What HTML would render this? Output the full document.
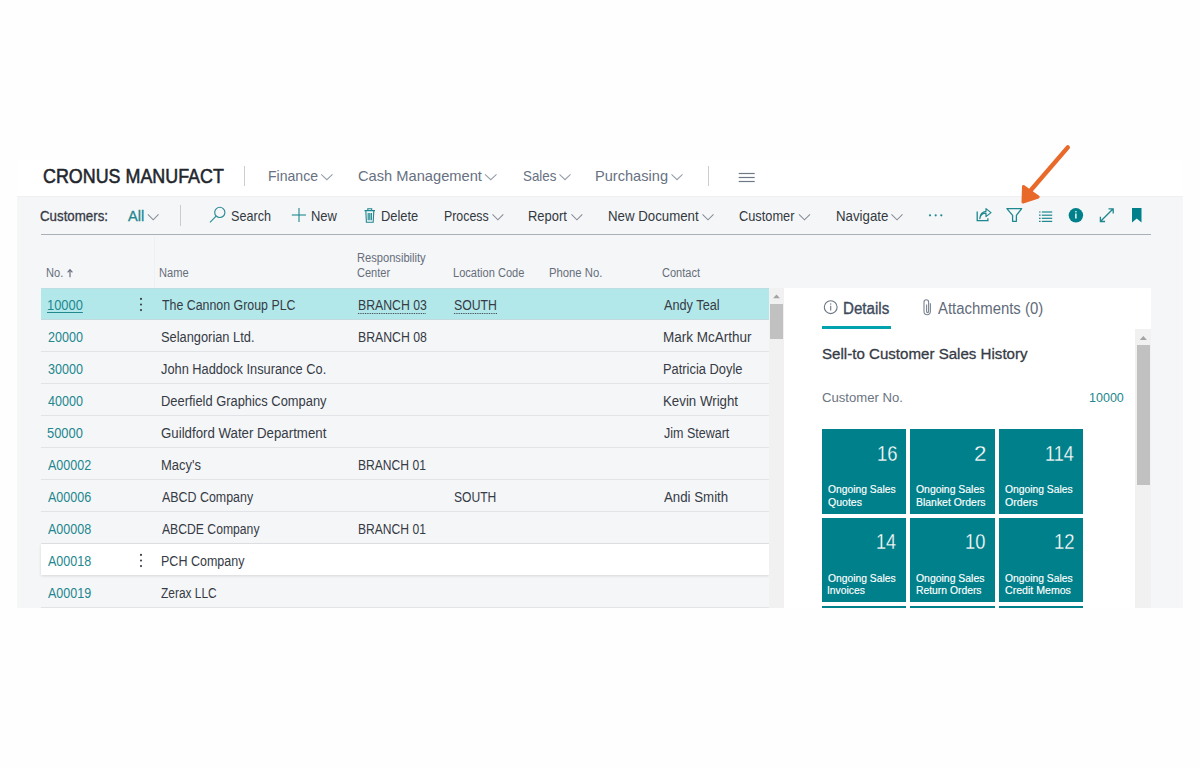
<!DOCTYPE html>
<html><head><meta charset="utf-8">
<style>
html,body{margin:0;padding:0;}
body{width:1200px;height:768px;overflow:hidden;background:#fefefe;position:relative;font-family:"Liberation Sans",sans-serif;}
.a{position:absolute;}
.t{position:absolute;line-height:1;white-space:nowrap;font-family:"Liberation Sans",sans-serif;}
svg{position:absolute;overflow:visible;}
</style></head><body>
<!-- panel header (white) -->
<div class="a" style="left:17px;top:159px;width:1166px;height:37px;background:#ffffff"></div>
<!-- gray body -->
<div class="a" style="left:17px;top:196px;width:1166px;height:412px;background:#f5f6f8"></div>
<div class="a" style="left:17px;top:196px;width:1166px;height:1px;background:#f0f0f2"></div>
<!-- header separators -->
<div class="a" style="left:244px;top:166px;width:1px;height:20px;background:#c9cdd2"></div>
<div class="a" style="left:708px;top:166px;width:1px;height:20px;background:#c9cdd2"></div>
<!-- toolbar separator -->
<div class="a" style="left:180px;top:205px;width:1px;height:21px;background:#c9cdd2"></div>
<!-- toolbar underline -->
<div class="a" style="left:41px;top:234px;width:1110px;height:1px;background:#a9b0b8"></div>

<!-- table rows -->
<div class="a" style="left:154px;top:236px;width:1px;height:52px;background:#eef0f2"></div>
<div class="a" style="left:41px;top:288px;width:728px;height:31.5px;background:#b2e8ea"></div>
<div class="a" style="left:41px;top:288px;width:728px;height:1px;background:#bcdde1"></div>
<div class="a" style="left:41px;top:319px;width:728px;height:1px;background:#c2dadd"></div>
<div class="a" style="left:41px;top:351px;width:728px;height:1px;background:#e1e3e6"></div>
<div class="a" style="left:41px;top:383px;width:728px;height:1px;background:#e1e3e6"></div>
<div class="a" style="left:41px;top:415px;width:728px;height:1px;background:#e1e3e6"></div>
<div class="a" style="left:41px;top:447px;width:728px;height:1px;background:#e1e3e6"></div>
<div class="a" style="left:41px;top:479px;width:728px;height:1px;background:#e1e3e6"></div>
<div class="a" style="left:41px;top:511px;width:728px;height:1px;background:#e1e3e6"></div>
<div class="a" style="left:41px;top:607px;width:728px;height:1px;background:#e1e3e6"></div>
<div class="a" style="left:41px;top:543px;width:728px;height:1px;background:#e1e3e6"></div>
<div class="a" style="left:41px;top:544px;width:728px;height:31px;background:#ffffff;box-shadow:0 1px 3px rgba(0,0,0,0.13)"></div>
<!-- table scrollbar -->
<div class="a" style="left:769px;top:288px;width:15px;height:320px;background:#f1f1f1"></div>
<div class="a" style="left:770px;top:304px;width:13px;height:35px;background:#c1c1c1"></div>

<!-- right panel -->
<div class="a" style="left:784px;top:288px;width:367px;height:320px;background:#ffffff"></div>
<div class="a" style="left:822px;top:326px;width:69px;height:3px;background:#00a3ad"></div>
<div class="a" style="left:1135px;top:329px;width:16px;height:279px;background:#f1f1f1"></div>
<div class="a" style="left:1137px;top:345px;width:13px;height:140px;background:#c1c1c1"></div>

<div class="a" style="left:822px;top:429.3px;width:84px;height:84.5px;background:#00808a"></div>
<div class="a" style="left:910px;top:429.3px;width:85px;height:84.5px;background:#00808a"></div>
<div class="a" style="left:999px;top:429.3px;width:84px;height:84.5px;background:#00808a"></div>
<div class="a" style="left:822px;top:517.7px;width:84px;height:84.5px;background:#00808a"></div>
<div class="a" style="left:910px;top:517.7px;width:85px;height:84.5px;background:#00808a"></div>
<div class="a" style="left:999px;top:517.7px;width:84px;height:84.5px;background:#00808a"></div>
<div class="a" style="left:822px;top:606.3px;width:84px;height:1.7px;background:#00808a"></div>
<div class="a" style="left:910px;top:606.3px;width:85px;height:1.7px;background:#00808a"></div>
<div class="a" style="left:999px;top:606.3px;width:84px;height:1.7px;background:#00808a"></div>
<div class="t" id="t0" style="top:166.11px;font-size:20.3px;color:#22262c;left:42.62px;transform-origin:0 0;transform:scaleX(0.8820);-webkit-text-stroke:0.55px #22262c">CRONUS MANUFACT</div>
<div class="t" id="t1" style="top:168.77px;font-size:14.8px;color:#677181;left:268.21px;transform-origin:0 0;transform:scaleX(0.9500);">Finance</div>
<div class="t" id="t2" style="top:168.77px;font-size:14.8px;color:#677181;left:358.00px;transform-origin:0 0;transform:scaleX(0.9912);">Cash Management</div>
<div class="t" id="t3" style="top:168.77px;font-size:14.8px;color:#677181;left:523.05px;transform-origin:0 0;transform:scaleX(0.9028);">Sales</div>
<div class="t" id="t4" style="top:168.77px;font-size:14.8px;color:#677181;left:595.01px;transform-origin:0 0;transform:scaleX(0.9863);">Purchasing</div>
<div class="t" id="t5" style="top:209.19px;font-size:14.3px;color:#363b45;left:40.44px;transform-origin:0 0;transform:scaleX(0.9310);-webkit-text-stroke:0.3px #363b45">Customers:</div>
<div class="t" id="t6" style="top:209.19px;font-size:14.3px;color:#23878e;left:128.00px;transform-origin:0 0;transform:scaleX(1.0200);-webkit-text-stroke:0.3px #23878e">All</div>
<div class="t" id="t7" style="top:209.19px;font-size:14.3px;color:#333940;left:231.12px;transform-origin:0 0;transform:scaleX(0.8818);">Search</div>
<div class="t" id="t8" style="top:209.19px;font-size:14.3px;color:#333940;left:310.66px;transform-origin:0 0;transform:scaleX(0.9071);">New</div>
<div class="t" id="t9" style="top:209.19px;font-size:14.3px;color:#333940;left:381.05px;transform-origin:0 0;transform:scaleX(0.9024);">Delete</div>
<div class="t" id="t10" style="top:209.19px;font-size:14.3px;color:#333940;left:443.57px;transform-origin:0 0;transform:scaleX(0.8640);">Process</div>
<div class="t" id="t11" style="top:209.19px;font-size:14.3px;color:#333940;left:528.46px;transform-origin:0 0;transform:scaleX(0.9071);">Report</div>
<div class="t" id="t12" style="top:209.19px;font-size:14.3px;color:#333940;left:607.83px;transform-origin:0 0;transform:scaleX(0.9278);">New Document</div>
<div class="t" id="t13" style="top:209.19px;font-size:14.3px;color:#333940;left:739.05px;transform-origin:0 0;transform:scaleX(0.8952);">Customer</div>
<div class="t" id="t14" style="top:209.19px;font-size:14.3px;color:#333940;left:835.83px;transform-origin:0 0;transform:scaleX(0.9273);">Navigate</div>
<div class="t" id="t15" style="top:267.04px;font-size:12px;color:#666e7a;left:46.41px;transform-origin:0 0;transform:scaleX(0.9222);">No.</div>
<div class="t" id="t16" style="top:267.04px;font-size:12px;color:#666e7a;left:159.07px;transform-origin:0 0;transform:scaleX(0.9258);">Name</div>
<div class="t" id="t17" style="top:252.14px;font-size:12px;color:#666e7a;left:356.65px;transform-origin:0 0;transform:scaleX(0.9274);">Responsibility</div>
<div class="t" id="t18" style="top:267.04px;font-size:12px;color:#666e7a;left:356.65px;transform-origin:0 0;transform:scaleX(0.9200);">Center</div>
<div class="t" id="t19" style="top:267.04px;font-size:12px;color:#666e7a;left:452.65px;transform-origin:0 0;transform:scaleX(0.9221);">Location Code</div>
<div class="t" id="t20" style="top:267.04px;font-size:12px;color:#666e7a;left:548.64px;transform-origin:0 0;transform:scaleX(0.9400);">Phone No.</div>
<div class="t" id="t21" style="top:267.04px;font-size:12px;color:#666e7a;left:661.65px;transform-origin:0 0;transform:scaleX(0.9195);">Contact</div>
<div class="t" id="t22" style="top:298.35px;font-size:14px;color:#23878e;left:47.08px;transform-origin:0 0;transform:scaleX(0.9211);text-decoration:underline;text-decoration-thickness:1px;text-underline-offset:2px;">10000</div>
<div class="t" id="t23" style="top:298.35px;font-size:14px;color:#363b45;left:161.94px;transform-origin:0 0;transform:scaleX(0.8841);">The Cannon Group PLC</div>
<div class="t" id="t24" style="top:298.35px;font-size:14px;color:#363b45;left:358.24px;transform-origin:0 0;transform:scaleX(0.8769);text-decoration:underline dotted;text-decoration-thickness:1px;text-underline-offset:3px;">BRANCH 03</div>
<div class="t" id="t25" style="top:298.35px;font-size:14px;color:#363b45;left:454.06px;transform-origin:0 0;transform:scaleX(0.8771);text-decoration:underline dotted;text-decoration-thickness:1px;text-underline-offset:3px;">SOUTH</div>
<div class="t" id="t26" style="top:298.35px;font-size:14px;color:#363b45;left:663.62px;transform-origin:0 0;transform:scaleX(0.9082);">Andy Teal</div>
<div class="t" id="t27" style="top:330.35px;font-size:14px;color:#23878e;left:48.00px;transform-origin:0 0;transform:scaleX(0.8974);">20000</div>
<div class="t" id="t28" style="top:330.35px;font-size:14px;color:#363b45;left:161.04px;transform-origin:0 0;transform:scaleX(0.9168);">Selangorian Ltd.</div>
<div class="t" id="t29" style="top:330.35px;font-size:14px;color:#363b45;left:358.24px;transform-origin:0 0;transform:scaleX(0.8769);">BRANCH 08</div>
<div class="t" id="t30" style="top:330.35px;font-size:14px;color:#363b45;left:662.64px;transform-origin:0 0;transform:scaleX(0.9637);">Mark McArthur</div>
<div class="t" id="t31" style="top:362.35px;font-size:14px;color:#23878e;left:48.00px;transform-origin:0 0;transform:scaleX(0.8974);">30000</div>
<div class="t" id="t32" style="top:362.35px;font-size:14px;color:#363b45;left:161.04px;transform-origin:0 0;transform:scaleX(0.9151);">John Haddock Insurance Co.</div>
<div class="t" id="t33" style="top:362.35px;font-size:14px;color:#363b45;left:662.69px;transform-origin:0 0;transform:scaleX(0.9200);">Patricia Doyle</div>
<div class="t" id="t34" style="top:394.35px;font-size:14px;color:#23878e;left:48.00px;transform-origin:0 0;transform:scaleX(0.8974);">40000</div>
<div class="t" id="t35" style="top:394.35px;font-size:14px;color:#363b45;left:161.04px;transform-origin:0 0;transform:scaleX(0.9207);">Deerfield Graphics Company</div>
<div class="t" id="t36" style="top:394.35px;font-size:14px;color:#363b45;left:662.66px;transform-origin:0 0;transform:scaleX(0.9487);">Kevin Wright</div>
<div class="t" id="t37" style="top:426.35px;font-size:14px;color:#23878e;left:47.08px;transform-origin:0 0;transform:scaleX(0.9211);">50000</div>
<div class="t" id="t38" style="top:426.35px;font-size:14px;color:#363b45;left:161.03px;transform-origin:0 0;transform:scaleX(0.9471);">Guildford Water Department</div>
<div class="t" id="t39" style="top:426.35px;font-size:14px;color:#363b45;left:663.62px;transform-origin:0 0;transform:scaleX(0.8932);">Jim Stewart</div>
<div class="t" id="t40" style="top:458.35px;font-size:14px;color:#23878e;left:48.00px;transform-origin:0 0;transform:scaleX(0.8958);">A00002</div>
<div class="t" id="t41" style="top:458.35px;font-size:14px;color:#363b45;left:161.04px;transform-origin:0 0;transform:scaleX(0.9262);">Macy's</div>
<div class="t" id="t42" style="top:458.35px;font-size:14px;color:#363b45;left:358.25px;transform-origin:0 0;transform:scaleX(0.8641);">BRANCH 01</div>
<div class="t" id="t43" style="top:490.35px;font-size:14px;color:#23878e;left:48.00px;transform-origin:0 0;transform:scaleX(0.8958);">A00006</div>
<div class="t" id="t44" style="top:490.35px;font-size:14px;color:#363b45;left:161.94px;transform-origin:0 0;transform:scaleX(0.8874);">ABCD Company</div>
<div class="t" id="t45" style="top:490.35px;font-size:14px;color:#363b45;left:454.07px;transform-origin:0 0;transform:scaleX(0.8646);">SOUTH</div>
<div class="t" id="t46" style="top:490.35px;font-size:14px;color:#363b45;left:663.61px;transform-origin:0 0;transform:scaleX(0.9478);">Andi Smith</div>
<div class="t" id="t47" style="top:522.35px;font-size:14px;color:#23878e;left:48.00px;transform-origin:0 0;transform:scaleX(0.8958);">A00008</div>
<div class="t" id="t48" style="top:522.35px;font-size:14px;color:#363b45;left:161.93px;transform-origin:0 0;transform:scaleX(0.8699);">ABCDE Company</div>
<div class="t" id="t49" style="top:522.35px;font-size:14px;color:#363b45;left:358.25px;transform-origin:0 0;transform:scaleX(0.8641);">BRANCH 01</div>
<div class="t" id="t50" style="top:554.35px;font-size:14px;color:#23878e;left:48.00px;transform-origin:0 0;transform:scaleX(0.8958);">A00018</div>
<div class="t" id="t51" style="top:554.35px;font-size:14px;color:#363b45;left:161.05px;transform-origin:0 0;transform:scaleX(0.8935);">PCH Company</div>
<div class="t" id="t52" style="top:586.35px;font-size:14px;color:#23878e;left:48.00px;transform-origin:0 0;transform:scaleX(0.8958);">A00019</div>
<div class="t" id="t53" style="top:586.35px;font-size:14px;color:#363b45;left:161.07px;transform-origin:0 0;transform:scaleX(0.8516);">Zerax LLC</div>
<div class="t" id="t54" style="top:301.02px;font-size:15.8px;color:#3d4a5c;left:842.55px;transform-origin:0 0;transform:scaleX(0.9574);-webkit-text-stroke:0.35px #3d4a5c">Details</div>
<div class="t" id="t55" style="top:301.02px;font-size:15.8px;color:#5f6b7a;left:938.00px;transform-origin:0 0;transform:scaleX(0.9432);">Attachments (0)</div>
<div class="t" id="t56" style="top:345.93px;font-size:15.2px;color:#363b45;left:822.00px;transform-origin:0 0;transform:scaleX(0.9942);-webkit-text-stroke:0.3px #363b45">Sell-to Customer Sales History</div>
<div class="t" id="t57" style="top:391.09px;font-size:13.6px;color:#6b7480;left:822.02px;transform-origin:0 0;transform:scaleX(0.9659);">Customer No.</div>
<div class="t" id="t58" style="top:391.09px;font-size:13.6px;color:#23878e;right:76.00px;transform-origin:100% 0;transform:scaleX(0.9200);">10000</div>
<div class="t" id="t59" style="top:442.77px;font-size:22.6px;color:#ffffff;left:877.18px;transform-origin:0 0;transform:scaleX(0.8174);-webkit-text-stroke:0.3px #00808a">16</div>
<div class="t" id="t60" style="top:485.28px;font-size:10.3px;color:#ffffff;left:828.00px;transform-origin:0 0;-webkit-text-stroke:0.15px #ffffff">Ongoing Sales</div>
<div class="t" id="t61" style="top:497.78px;font-size:10.3px;color:#ffffff;left:828.00px;transform-origin:0 0;transform:scaleX(1.0212);-webkit-text-stroke:0.15px #ffffff">Quotes</div>
<div class="t" id="t62" style="top:442.77px;font-size:22.6px;color:#ffffff;left:974.00px;transform-origin:0 0;transform:scaleX(0.9909);-webkit-text-stroke:0.3px #00808a">2</div>
<div class="t" id="t63" style="top:485.28px;font-size:10.3px;color:#ffffff;left:915.99px;transform-origin:0 0;transform:scaleX(1.0134);-webkit-text-stroke:0.15px #ffffff">Ongoing Sales</div>
<div class="t" id="t64" style="top:497.78px;font-size:10.3px;color:#ffffff;left:915.99px;transform-origin:0 0;transform:scaleX(1.0132);-webkit-text-stroke:0.15px #ffffff">Blanket Orders</div>
<div class="t" id="t65" style="top:442.77px;font-size:22.6px;color:#ffffff;left:1045.20px;transform-origin:0 0;transform:scaleX(0.8000);-webkit-text-stroke:0.3px #00808a">114</div>
<div class="t" id="t66" style="top:485.28px;font-size:10.3px;color:#ffffff;left:1005.00px;transform-origin:0 0;-webkit-text-stroke:0.15px #ffffff">Ongoing Sales</div>
<div class="t" id="t67" style="top:497.78px;font-size:10.3px;color:#ffffff;left:1005.00px;transform-origin:0 0;transform:scaleX(1.0323);-webkit-text-stroke:0.15px #ffffff">Orders</div>
<div class="t" id="t68" style="top:531.37px;font-size:22.6px;color:#ffffff;left:876.48px;transform-origin:0 0;transform:scaleX(0.8000);-webkit-text-stroke:0.3px #00808a">14</div>
<div class="t" id="t69" style="top:573.88px;font-size:10.3px;color:#ffffff;left:828.00px;transform-origin:0 0;-webkit-text-stroke:0.15px #ffffff">Ongoing Sales</div>
<div class="t" id="t70" style="top:586.38px;font-size:10.3px;color:#ffffff;left:827.00px;transform-origin:0 0;-webkit-text-stroke:0.15px #ffffff">Invoices</div>
<div class="t" id="t71" style="top:531.37px;font-size:22.6px;color:#ffffff;left:965.19px;transform-origin:0 0;transform:scaleX(0.8083);-webkit-text-stroke:0.3px #00808a">10</div>
<div class="t" id="t72" style="top:573.88px;font-size:10.3px;color:#ffffff;left:915.99px;transform-origin:0 0;transform:scaleX(1.0134);-webkit-text-stroke:0.15px #ffffff">Ongoing Sales</div>
<div class="t" id="t73" style="top:586.38px;font-size:10.3px;color:#ffffff;left:916.00px;transform-origin:0 0;transform:scaleX(1.0046);-webkit-text-stroke:0.15px #ffffff">Return Orders</div>
<div class="t" id="t74" style="top:531.37px;font-size:22.6px;color:#ffffff;left:1053.72px;transform-origin:0 0;transform:scaleX(0.8174);-webkit-text-stroke:0.3px #00808a">12</div>
<div class="t" id="t75" style="top:573.88px;font-size:10.3px;color:#ffffff;left:1005.00px;transform-origin:0 0;-webkit-text-stroke:0.15px #ffffff">Ongoing Sales</div>
<div class="t" id="t76" style="top:586.38px;font-size:10.3px;color:#ffffff;left:1005.00px;transform-origin:0 0;transform:scaleX(1.0281);-webkit-text-stroke:0.15px #ffffff">Credit Memos</div>
<svg width="1200" height="768" style="left:0;top:0;position:absolute"><polyline points="321.2,174.3 326.85,179.7 332.5,174.3" fill="none" stroke="#959eaa" stroke-width="1.05"/><polyline points="485,174.3 490.75,179.7 496.5,174.3" fill="none" stroke="#959eaa" stroke-width="1.05"/><polyline points="559.5,174.3 565.0,179.7 570.5,174.3" fill="none" stroke="#959eaa" stroke-width="1.05"/><polyline points="671.5,174.3 677.0,179.7 682.5,174.3" fill="none" stroke="#959eaa" stroke-width="1.05"/><polyline points="147.9,214.3 153.2,219.8 158.5,214.3" fill="none" stroke="#868c95" stroke-width="1.05"/><polyline points="492.5,214.3 497.9,219.8 503.3,214.3" fill="none" stroke="#868c95" stroke-width="1.05"/><polyline points="571.5,214.3 576.9,219.8 582.3,214.3" fill="none" stroke="#868c95" stroke-width="1.05"/><polyline points="702.5,214.3 708.0,219.8 713.5,214.3" fill="none" stroke="#868c95" stroke-width="1.05"/><polyline points="799,214.3 804.5,219.8 810,214.3" fill="none" stroke="#868c95" stroke-width="1.05"/><polyline points="891.5,214.3 897.0,219.8 902.5,214.3" fill="none" stroke="#868c95" stroke-width="1.05"/><line x1="738.7" x2="754.7" y1="173.5" y2="173.5" stroke="#6f7886" stroke-width="1.2"/><line x1="738.7" x2="754.7" y1="177.5" y2="177.5" stroke="#6f7886" stroke-width="1.2"/><line x1="738.7" x2="754.7" y1="181.5" y2="181.5" stroke="#6f7886" stroke-width="1.2"/><circle cx="219.8" cy="212.4" r="5.1" fill="none" stroke="#2a8d94" stroke-width="1.15"/><line x1="210" y1="222.4" x2="216.1" y2="216.2" stroke="#2a8d94" stroke-width="1.15"/><line x1="291.8" x2="306" y1="215" y2="215" stroke="#1f878e" stroke-width="1.1"/><line x1="299" x2="299" y1="207.9" y2="222" stroke="#1f878e" stroke-width="1.1"/><path d="M364.5 210.6 H375 M367.8 210.6 V208.8 H371.7 V210.6 M365.8 210.6 L366.4 222.2 H373.2 L373.8 210.6 M368.2 213 V220.2 M369.8 213 V220.2 M371.4 213 V220.2" fill="none" stroke="#1f878e" stroke-width="1.1"/><circle cx="930" cy="215.3" r="1.1" fill="#1f878e"/><circle cx="935.7" cy="215.3" r="1.1" fill="#1f878e"/><circle cx="941.3" cy="215.3" r="1.1" fill="#1f878e"/><path d="M977.2 211.6 V220.6 H987.9 V218.2" fill="none" stroke="#1f878e" stroke-width="1.3"/><path d="M979.8 218.6 C980.4 214.6 983 213.2 986 213.2 V216.6 L991 212.6 L986 208.6 V211.4 C982.6 211.6 979.8 214.2 979.8 218.6 Z" fill="none" stroke="#1f878e" stroke-width="1.2" stroke-linejoin="round"/><path d="M1006.9 208.7 H1021.7 L1016.4 215.4 V221.3 H1012.6 V215.4 Z" fill="none" stroke="#1f878e" stroke-width="1.3" stroke-linejoin="round"/><line x1="1039" x2="1040.6" y1="212" y2="212" stroke="#1f878e" stroke-width="1.2"/><line x1="1041.8" x2="1052.2" y1="212" y2="212" stroke="#1f878e" stroke-width="1.2"/><line x1="1039" x2="1040.6" y1="215.2" y2="215.2" stroke="#1f878e" stroke-width="1.2"/><line x1="1041.8" x2="1052.2" y1="215.2" y2="215.2" stroke="#1f878e" stroke-width="1.2"/><line x1="1039" x2="1040.6" y1="218.3" y2="218.3" stroke="#1f878e" stroke-width="1.2"/><line x1="1041.8" x2="1052.2" y1="218.3" y2="218.3" stroke="#1f878e" stroke-width="1.2"/><line x1="1039" x2="1040.6" y1="221.4" y2="221.4" stroke="#1f878e" stroke-width="1.2"/><line x1="1041.8" x2="1052.2" y1="221.4" y2="221.4" stroke="#1f878e" stroke-width="1.2"/><circle cx="1075.9" cy="215.3" r="7.2" fill="#00808a"/><line x1="1075.9" x2="1075.9" y1="213.4" y2="218.6" stroke="#fff" stroke-width="1.4"/><circle cx="1075.9" cy="211.7" r="0.8" fill="#fff"/><path d="M1100.4 221.5 L1113.2 208.8 M1100.4 216.8 V221.5 H1105.1 M1108.5 208.8 H1113.2 V213.5" fill="none" stroke="#1f878e" stroke-width="1.3"/><path d="M1132 207.9 H1141.5 V222.5 L1136.75 218.6 L1132 222.5 Z" fill="#00808a"/><line x1="1067.8" y1="147.4" x2="1031" y2="190" stroke="#e8692a" stroke-width="4.4" stroke-linecap="round"/><path d="M1023.5 186.5 L1038.2 197 L1023 202 Z" fill="#e8692a" stroke="#e8692a" stroke-width="3" stroke-linejoin="round"/><path d="M70 270 V277.2 M67.6 272.3 L70 269.6 L72.4 272.3" fill="none" stroke="#6b7280" stroke-width="1.2"/><circle cx="141" cy="298.9" r="1.05" fill="#3a3f48"/><circle cx="141" cy="304.5" r="1.05" fill="#3a3f48"/><circle cx="141" cy="310.1" r="1.05" fill="#3a3f48"/><circle cx="141" cy="554.9" r="1.05" fill="#3a3f48"/><circle cx="141" cy="560.5" r="1.05" fill="#3a3f48"/><circle cx="141" cy="566.1" r="1.05" fill="#3a3f48"/><path d="M773.1 298.2 H779.9 L776.5 294.6 Z" fill="#a3a3a3"/><path d="M1139.8 339.9 H1146.9 L1143.35 335.9 Z" fill="#a3a3a3"/><circle cx="830.7" cy="307.2" r="6.4" fill="none" stroke="#6b7685" stroke-width="1.1"/><line x1="830.7" x2="830.7" y1="305.8" y2="310.6" stroke="#6b7685" stroke-width="1.1"/><circle cx="830.7" cy="304" r="0.7" fill="#6b7685"/><path d="M926.6 304.6 V311.6 A1 1 0 0 0 928.6 311.6 V302.1 A2.3 2.3 0 0 0 924 302.1 V311.6 A3.2 3.2 0 0 0 930.4 311.6 V303.2" fill="none" stroke="#7a8491" stroke-width="1.1"/></svg>
</body></html>
